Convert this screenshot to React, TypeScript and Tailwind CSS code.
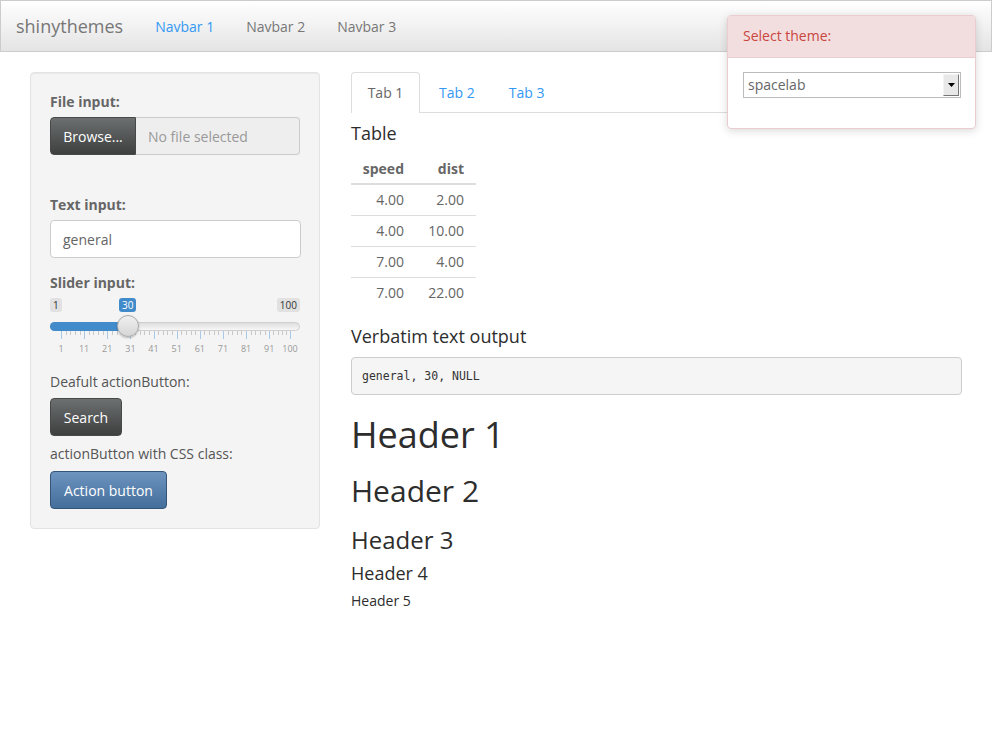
import React from "react";

const FONT = { fontFamily: '"Open Sans", "Liberation Sans", sans-serif' };

const majors = [1, 11, 21, 31, 41, 51, 61, 71, 81, 91, 100];

function Slider() {
  // grid spans x=11..240 inside a 250px wide box
  const x0 = 11;
  const span = 229;
  const pos = (v: number) => x0 + ((v - 1) / 99) * span;
  const ticks: { x: number; major: boolean }[] = [];
  for (let i = 0; i < 10; i++) {
    const a = pos(majors[i]);
    const b = pos(majors[i + 1]);
    ticks.push({ x: a, major: true });
    for (let k = 1; k < 5; k++) ticks.push({ x: a + ((b - a) * k) / 5, major: false });
  }
  ticks.push({ x: pos(100), major: true });
  const handle = pos(30);

  return (
    <div className="relative h-[66px] w-[250px]">
      <span className="absolute left-0 top-[5px] h-[14px] rounded-[3px] bg-[#e1e1e1] px-[3px] text-[10px] leading-[14px] text-[#333]">
        1
      </span>
      <span className="absolute left-[69px] top-[5px] h-[14px] rounded-[3px] bg-[#428bca] px-[3px] text-[10px] leading-[14px] text-white">
        30
      </span>
      <span className="absolute right-0 top-[5px] h-[14px] rounded-[3px] bg-[#e1e1e1] px-[3px] text-[10px] leading-[14px] text-[#333]">
        100
      </span>
      <div className="absolute left-0 right-0 top-[29px] h-[9px] rounded-full border border-[#cfcfcf] bg-gradient-to-b from-[#dedede] to-[#f7f7f7]" />
      <div
        className="absolute left-0 top-[29px] h-[9px] rounded-l-full bg-[#428bca]"
        style={{ width: handle }}
      />
      <svg className="absolute left-0 top-[38px]" width="250" height="10">
        {ticks.map((t, i) => (
          <line
            key={i}
            x1={Math.round(t.x) + 0.5}
            x2={Math.round(t.x) + 0.5}
            y1={0}
            y2={t.major ? 8 : 4}
            stroke={t.major ? "#a9c9e8" : "#c8c8c8"}
            strokeWidth={1}
          />
        ))}
      </svg>
      {majors.map((m) => (
        <span
          key={m}
          className="absolute top-[50px] w-[30px] -translate-x-1/2 text-center text-[9px] leading-[12px] text-[#999]"
          style={{ left: pos(m) }}
        >
          {m}
        </span>
      ))}
      <div
        className="absolute top-[22px] h-[22px] w-[22px] -translate-x-1/2 rounded-full border border-[#aaa] bg-gradient-to-b from-[#f0f0f0] to-[#d6d6d6] shadow-[0_1px_2px_rgba(0,0,0,0.25)]"
        style={{ left: handle }}
      />
    </div>
  );
}

function Sidebar() {
  return (
    <div className="w-[290px] shrink-0 self-start rounded-[4px] border border-[#e3e3e3] bg-[#f4f4f4] px-[19px] pb-[19px] pt-[19px] shadow-[inset_0_1px_1px_rgba(0,0,0,0.05)]">
      <div className="mb-[5px] text-[14px] font-bold leading-[20px]">File input:</div>
      <div className="flex h-[38px] w-[250px]">
        <div className="flex w-[86px] items-center justify-center rounded-l-[4px] border border-[#474949] bg-gradient-to-b from-[#6d7070] to-[#3e4040] text-[14px] text-white">
          Browse...
        </div>
        <div className="flex flex-1 items-center rounded-r-[4px] border border-l-0 border-[#ccc] bg-[#eee] px-3 text-[14px] text-[#999]">
          No file selected
        </div>
      </div>
      <div className="mb-[5px] mt-[40px] text-[14px] font-bold leading-[20px]">Text input:</div>
      <div className="flex h-[38px] w-[251px] items-center rounded-[4px] border border-[#ccc] bg-white px-3 text-[14px] text-[#666]">
        general
      </div>
      <div className="mt-[15px] text-[14px] font-bold leading-[20px]">Slider input:</div>
      <Slider />
      <div className="mt-[13px] text-[14px] leading-[20px] text-[#555]">Deafult actionButton:</div>
      <div className="mt-[6px] flex h-[38px] w-[72px] items-center justify-center rounded-[4px] border border-[#474949] bg-gradient-to-b from-[#6d7070] to-[#3e4040] text-[14px] text-white">
        Search
      </div>
      <div className="mt-[8px] text-[14px] leading-[20px] text-[#555]">actionButton with CSS class:</div>
      <div className="mt-[7px] flex h-[38px] w-[117px] items-center justify-center rounded-[4px] border border-[#345578] bg-gradient-to-b from-[#6d94bf] to-[#446e9b] text-[14px] text-white">
        Action button
      </div>
    </div>
  );
}

const rows = [
  ["4.00", "2.00"],
  ["4.00", "10.00"],
  ["7.00", "4.00"],
  ["7.00", "22.00"],
];

function Main() {
  return (
    <div className="flex-1">
      <div className="flex h-[41px] border-b border-[#ddd] text-[14px]">
        <div className="-mb-px flex h-[41px] w-[69px] items-center justify-center rounded-t-[4px] border border-b-0 border-[#ddd] bg-white pb-[1px] text-[#666]">
          Tab 1
        </div>
        <div className="flex items-center pl-[19px] pr-[17px] text-[#3399f3]">Tab 2</div>
        <div className="flex items-center px-[17px] text-[#3399f3]">Tab 3</div>
      </div>
      <h4 className="mb-[10px] mt-[11px] text-[18px] leading-[1.1] text-[#2d2d2d]">Table</h4>
      <table className="text-[14px] text-[#666]">
        <thead>
          <tr className="border-b-2 border-[#ddd]">
            <th className="w-[61px] px-2 py-[5px] text-right font-bold leading-[19px]">speed</th>
            <th className="w-[64px] px-3 py-[5px] text-right font-bold leading-[19px]">dist</th>
          </tr>
        </thead>
        <tbody>
          {rows.map((r, i) => (
            <tr key={i} className={i > 0 ? "border-t border-[#ddd]" : ""}>
              <td className="px-2 py-[5px] text-right leading-[20px]">{r[0]}</td>
              <td className="px-3 py-[5px] text-right leading-[20px]">{r[1]}</td>
            </tr>
          ))}
        </tbody>
      </table>
      <h4 className="mb-[10px] mt-[19px] text-[18px] leading-[1.1] text-[#2d2d2d]">Verbatim text output</h4>
      <pre
        className="mb-[10px] h-[38px] rounded-[4px] border border-[#ccc] bg-[#f5f5f5] px-[10px] py-[10px] text-[11.5px] leading-[17px] text-[#333]"
        style={{ fontFamily: '"DejaVu Sans Mono", "Liberation Mono", monospace' }}
      >
        general, 30, NULL
      </pre>
      <h1 className="mb-[10px] mt-[20px] text-[36px] leading-[1.1] text-[#2d2d2d]">Header 1</h1>
      <h2 className="mb-[10px] mt-[20px] text-[30px] leading-[1.1] text-[#2d2d2d]">Header 2</h2>
      <h3 className="mb-[10px] mt-[20px] text-[24px] leading-[1.1] text-[#2d2d2d]">Header 3</h3>
      <h4 className="mb-[10px] mt-[10px] text-[18px] leading-[1.1] text-[#2d2d2d]">Header 4</h4>
      <h5 className="mt-[10px] text-[14px] leading-[1.1] text-[#2d2d2d]">Header 5</h5>
    </div>
  );
}

function ThemePicker() {
  return (
    <div className="absolute right-[16px] top-[15px] w-[249px] rounded-[4px] border border-[#ebccd1] bg-white shadow-[0_2px_8px_rgba(0,0,0,0.15)]">
      <div className="flex h-[42px] items-center rounded-t-[4px] border-b border-[#ebccd1] bg-[#f2dede] px-[15px] pb-[2px] text-[14px] text-[#c9463f]">
        Select theme:
      </div>
      <div className="px-[15px] pb-[30px] pt-[14px]">
        <div className="flex h-[26px] w-[218px] items-center border border-[#bbb] bg-white pb-[1px] pl-[4px] pr-[1px] text-[14px] text-[#666]">
          <span className="flex-1">spacelab</span>
          <div className="flex h-[22px] w-[16px] items-center justify-center border border-b-[#777] border-l-[#f4f4f4] border-r-[#777] border-t-[#f4f4f4] bg-[#e8e8e8]">
            <svg width="7" height="4" viewBox="0 0 7 4">
              <path d="M0 0h7L3.5 4z" fill="#000" />
            </svg>
          </div>
        </div>
      </div>
    </div>
  );
}

export default function App() {
  return (
    <div className="relative min-h-[744px] bg-white text-[#666]" style={FONT}>
      <nav className="flex h-[52px] items-center border border-[#ccc] bg-gradient-to-b from-white to-[#e4e4e4] pt-[1px]">
        <span className="pl-[15px] pr-[17px] text-[18px] text-[#777]">shinythemes</span>
        <span className="pl-[15px] pr-[16px] text-[14px] text-[#3399f3]">Navbar 1</span>
        <span className="pl-[16px] pr-[16px] text-[14px] text-[#777]">Navbar 2</span>
        <span className="pl-[16px] text-[14px] text-[#777]">Navbar 3</span>
      </nav>
      <div className="flex gap-[31px] pl-[30px] pr-[30px] pt-[20px]">
        <Sidebar />
        <Main />
      </div>
      <ThemePicker />
    </div>
  );
}
